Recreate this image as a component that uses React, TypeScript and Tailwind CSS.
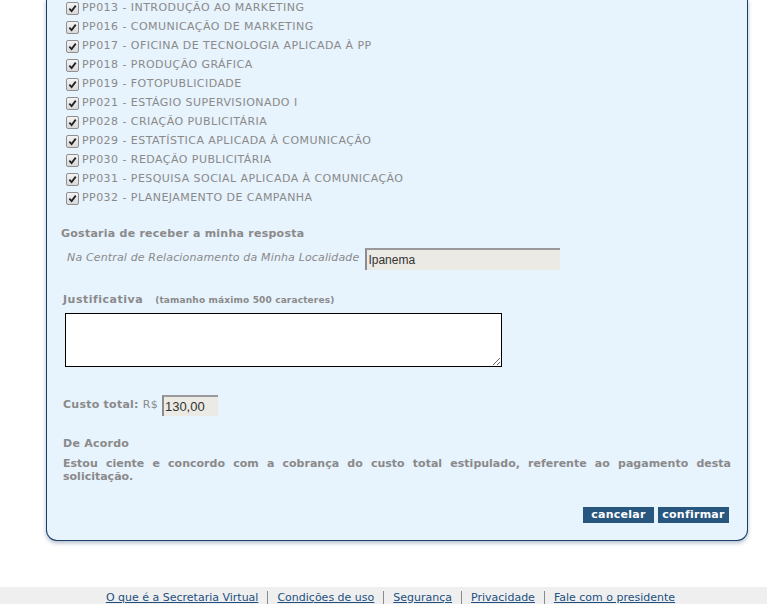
import React from 'react';

// Final confirmation step of a "Secretaria Virtual" request: list of chosen
// disciplines, where to receive the answer, justification, cost and the
// agreement text with cancel/confirm buttons.

const DISCIPLINAS = [
  'PP013 - INTRODUÇÃO AO MARKETING',
  'PP016 - COMUNICAÇÃO DE MARKETING',
  'PP017 - OFICINA DE TECNOLOGIA APLICADA À PP',
  'PP018 - PRODUÇÃO GRÁFICA',
  'PP019 - FOTOPUBLICIDADE',
  'PP021 - ESTÁGIO SUPERVISIONADO I',
  'PP028 - CRIAÇÃO PUBLICITÁRIA',
  'PP029 - ESTATÍSTICA APLICADA À COMUNICAÇÃO',
  'PP030 - REDAÇÃO PUBLICITÁRIA',
  'PP031 - PESQUISA SOCIAL APLICADA À COMUNICAÇÃO',
  'PP032 - PLANEJAMENTO DE CAMPANHA',
];

const FOOTER_LINKS = [
  'O que é a Secretaria Virtual',
  'Condições de uso',
  'Segurança',
  'Privacidade',
  'Fale com o presidente',
];

function CheckBox() {
  return (
    <span className="grid h-[13px] w-[13px] shrink-0 place-items-center rounded-[2px] border border-[#8f8f8f] bg-gradient-to-b from-[#f4f4f4] to-[#d8d8d8]">
      <svg viewBox="0 0 10 10" className="h-[9px] w-[9px]">
        <path d="M1.5 5.2 L4 7.8 L8.6 1.8" fill="none" stroke="#222" strokeWidth="2" />
      </svg>
    </span>
  );
}

export default function App() {
  return (
    <div className="min-h-[604px] bg-white font-['DejaVu_Sans',Verdana,sans-serif] text-[11px] text-[#8a8a8a]">
      <div className="ml-[46px] w-[702px] rounded-b-[11px] border-x border-b border-[#1d3e6b] bg-[#e7f3fd] tracking-[0.25px] shadow-[0_2px_4px_rgba(30,60,110,0.35)]">
        {/* disciplinas */}
        <div className="-mt-px flex flex-col pl-[19px]">
          {DISCIPLINAS.map((d) => (
            <div key={d} className="flex h-[19px] items-center gap-[3px]">
              <CheckBox />
              <span className="tracking-[0.45px]">{d}</span>
            </div>
          ))}
        </div>

        <div className="mt-[18px] pl-[14px] font-bold">Gostaria de receber a minha resposta</div>
        <div className="mt-[5px] flex items-center pl-[20px]">
          <span className="italic tracking-[0.15px]">Na Central de Relacionamento da Minha Localidade</span>
          <div className="ml-[6px] flex h-[22px] w-[195px] items-center border-l-2 border-t-2 border-l-[#8d8d8d] border-t-[#9a9a9a] bg-[#eceae4] pl-[1px] font-['Liberation_Sans',Arial,sans-serif] text-[12px] tracking-normal text-[#333]">
            Ipanema
          </div>
        </div>

        <div className="mt-[22px] flex items-baseline pl-[16px]">
          <span className="font-bold tracking-[0.5px]">Justificativa</span>
          <span className="ml-[12px] text-[9px] font-bold tracking-[0.15px]">(tamanho máximo 500 caracteres)</span>
        </div>
        <div className="mt-[5px] pl-[18px]">
          <textarea className="block h-[54px] w-[437px] resize border border-black bg-white outline-none" />
        </div>

        <div className="mt-[28px] flex items-center pl-[16px]">
          <span className="font-bold">Custo total:</span>
          <span className="ml-[4px]">R$</span>
          <div className="ml-[4px] flex h-[21px] w-[56px] items-center border-l-2 border-t-2 border-l-[#8d8d8d] border-t-[#9a9a9a] bg-[#eceae4] pl-[1px] font-['Liberation_Sans_Narrow','Liberation_Sans',Arial,sans-serif] text-[13px] tracking-normal text-[#333]">
            130,00
          </div>
        </div>

        <div className="mt-[20px] pl-[16px] font-bold">De Acordo</div>
        <p className="mt-[4px] pl-[16px] pr-[16px] text-justify font-bold leading-[13px] tracking-normal">
          Estou ciente e concordo com a cobrança do custo total estipulado, referente ao pagamento desta solicitação.
        </p>

        <div className="flex justify-end gap-[4px] pb-[17px] pr-[18px] pt-[24px]">
          <button className="h-[16px] w-[71px] bg-[#27567f] text-[11px] font-bold leading-[16px] text-white">cancelar</button>
          <button className="h-[16px] w-[71px] bg-[#27567f] text-[11px] font-bold leading-[16px] text-white">confirmar</button>
        </div>
      </div>

      <div className="mt-[46px] flex h-[17px] items-start justify-center bg-[#efefef] pl-[14px] pt-[4px] text-[11px] leading-[13px]">
        {FOOTER_LINKS.map((l, i) => (
          <React.Fragment key={l}>
            {i > 0 && <span className="mx-[9px] h-[13px] w-px bg-[#8a8a8a]" />}
            <a href="#" className="text-[#1d4f80] underline">
              {l}
            </a>
          </React.Fragment>
        ))}
      </div>
    </div>
  );
}
